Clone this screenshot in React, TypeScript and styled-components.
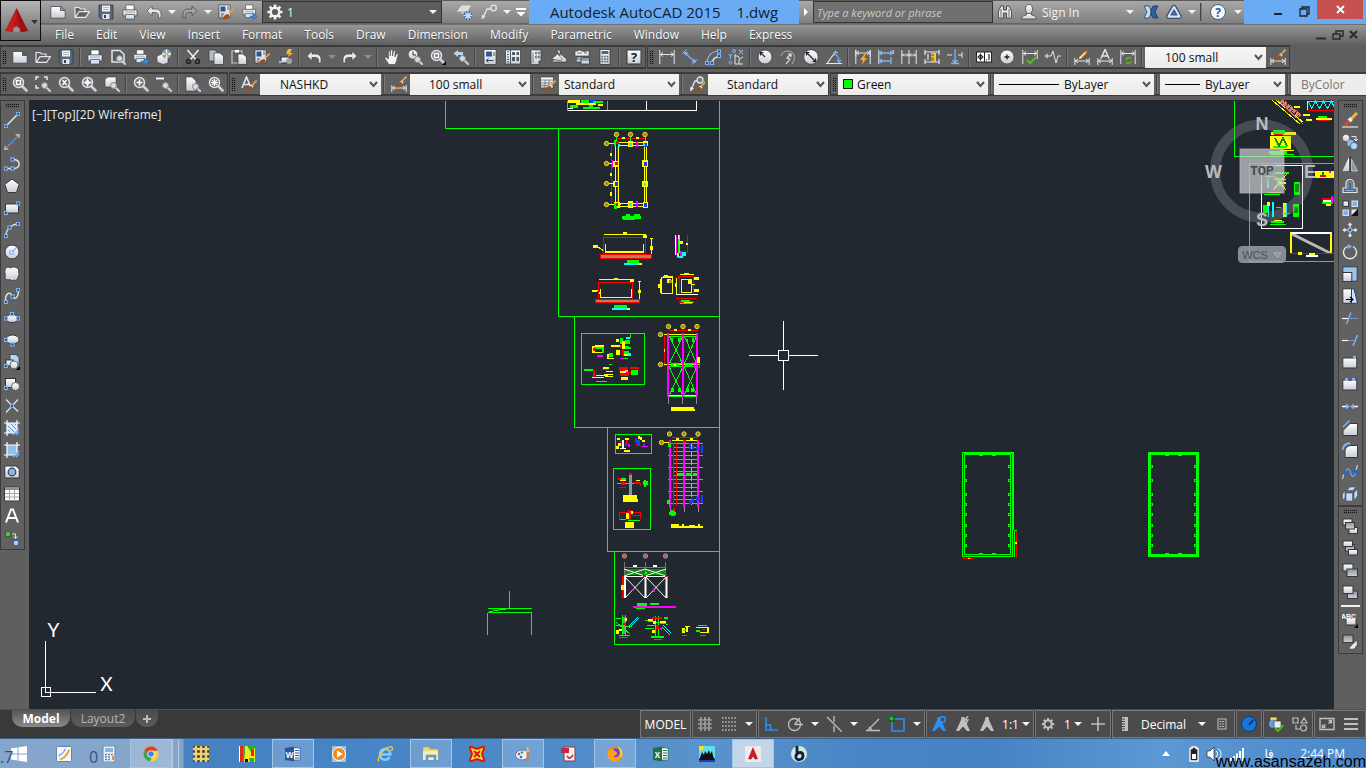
import React from 'react';
import styled, { createGlobalStyle, css } from 'styled-components';

const UI_FONT = '"Open Sans", "Noto Sans", sans-serif';

const GlobalStyle = createGlobalStyle`
  * { box-sizing: border-box; }
  body { margin: 0; background: #5f5f5f; font-family: ${UI_FONT}; font-size: 12px; color: #f2f2f2; overflow: hidden; }
  button, select, input { font: inherit; color: inherit; margin: 0; }
  button { border: 0; padding: 0; background: none; }
`;

/* ---------- icon drawing helpers ---------- */

const BLUE = '#7fb3f8';
const PAPER = 'url(#paper)';
const INK = '#34373b';
const LINE = '#e4e6e8';

const Grip = ({ x, y }: { x: number; y: number }) => (
  <rect x={x - 1.5} y={y - 1.5} width="3" height="3" fill="#2b3a52" stroke={BLUE} strokeWidth="1.2" />
);

const Lens = ({ x = 6.5, y = 6.5, children }: { x?: number; y?: number; children?: React.ReactNode }) => (
  <g transform={`translate(${x - 6.5} ${y - 6.5})`}>
    <path d="M10 10l4.5 4.5" stroke="#c9d2dc" strokeWidth="2.6" strokeLinecap="round" />
    <circle cx="6.5" cy="6.5" r="5" fill="#6b7178" stroke="#dfe2e6" strokeWidth="1.5" />
    {children}
  </g>
);

const SmallLens = () => (
  <g>
    <path d="M11.500 11.500l3.500 3.500" stroke="#c9d2dc" strokeWidth="2" strokeLinecap="round" />
    <circle cx="9.500" cy="9.500" r="3" fill="#d5dbe2" stroke="#80868d" />
  </g>
);

const Brush = () => (
  <g>
    <path d="M15.500 4.500L10.500 10" stroke="#f0a33a" strokeWidth="1.800" />
    <path d="M11.500 9.500L9.500 11.500" stroke="#e8e8e8" strokeWidth="3" />
    <path d="M10.500 10c1.500 1.500 1 4-1.500 5-1.500.5-4 .5-5-.5 2-.5 2-4.500 6.500-4.500z" fill="#96511f" />
  </g>
);

const Printer = () => (
  <g stroke={INK} strokeWidth=".6">
    <path d="M4 1h8v5H4z" fill="#fff" />
    <path d="M1 6h14v6H1z" fill={PAPER} />
    <path d="M3.500 10.500h9V15h-9z" fill="#cfe3f5" />
    <path d="M3 8h10" stroke="#70757b" />
  </g>
);

const Box = ({ x, y, w, h, dim }: { x: number; y: number; w: number; h: number; dim?: boolean }) => (
  <rect x={x} y={y} width={w} height={h} fill={dim ? 'url(#steel)' : PAPER} stroke={INK} strokeWidth="1" />
);

const Span = ({ y = 11 }: { y?: number }) => (
  <path d={`M.8 ${y - 3}v7M15.200 ${y - 3}v7M1 ${y}h14M4 ${y - 2}L1.500 ${y}L4 ${y + 2}M12 ${y - 2}l2.500 2l-2.500 2`} fill="none" stroke={LINE} strokeWidth="1" />
);

const Corner = () => <path d="M16 12v4h-4z" fill="#000" />;

const Person = ({ mark }: { mark?: React.ReactNode }) => (
  <g>
    <path d="M6.500 1h3l.5 3 5 11h-3L8 10.500 4 15H1L6 4z" fill="currentColor" />
    {mark}
  </g>
);

const UndoShape = ({ color = '#e4e6e8' }: { color?: string }) => (
  <path d="M6 2v3h3c4 0 6 2 6 5v4h-2.500v-2.500c0-2-1-3-3.500-3H6v3.200L1 7z" fill={color} stroke={INK} strokeWidth=".6" />
);

const GearShape = () => (
  <g>
    <circle cx="8" cy="8" r="4.300" fill="none" stroke="currentColor" strokeWidth="2.400" />
    <path d="M8 .5v3M8 12.500v3M.5 8h3M12.500 8h3M2.700 2.700l2 2M11.300 11.300l2 2M2.700 13.300l2-2M11.300 4.700l2-2" stroke="currentColor" strokeWidth="2.600" />
  </g>
);

const icons: Record<string, React.ReactNode> = {
  new: <path d="M.8 2.500h10l4.400 4v7.700H.8zM10.500 2.500v4h4.500" fill={PAPER} stroke={INK} strokeWidth=".7" />,
  open: <path d="M1 13V3.500h4l1.500 1.500H11v2.500M1.500 13.300l3.500-5.600h10.500L11.500 13.300z" fill="#5b6066" stroke={LINE} strokeWidth="1.200" />,
  save: <g><path d="M1 1h14v14H3L1 13z" fill="#56687b" stroke={INK} strokeWidth=".8" /><path d="M4 1.500h8v6H4z" fill="#f2f4f6" /><path d="M5 3.500h6M5 5.500h6" stroke="#9aa4ae" strokeWidth=".8" /><path d="M4.500 10h7v5h-7z" fill="#dfe5ea" /><path d="M6 11h2v3H6z" fill="#37424e" /></g>,
  print: <Printer />,
  preview: <g><path d="M2 1.500h8l4 4V13H2z" fill="#595e64" stroke={LINE} strokeWidth="1.500" /><SmallLens /></g>,
  publish: <g><g transform="scale(.9)"><Printer /></g><path d="M8 12.500h4M11.500 9.800l3.500 2.700-3.500 2.700z" stroke="#3d78c4" fill="#6ca7ea" strokeWidth="1.500" /></g>,
  web: <g><path d="M1 7l5-2 6 2v7l-5 1.500L1 13z" fill={PAPER} stroke={INK} strokeWidth=".6" /><circle cx="10.500" cy="5" r="4.600" fill="#5ab7ea" /><path d="M10.500 .5v9M6 5h9" stroke="#fff6c9" strokeWidth="1.500" /><path d="M7.500 2l6 6M13.500 2l-6 6" stroke="#e2693a" strokeWidth=".9" /></g>,
  cut: <g fill="none"><path d="M2.500 1l8.500 10M13.500 1L5 11" stroke="#eef0f2" strokeWidth="1.500" /><circle cx="3.500" cy="12.500" r="2" stroke="#1f2225" strokeWidth="1.500" /><circle cx="12.500" cy="12.500" r="2" stroke="#1f2225" strokeWidth="1.500" /></g>,
  copy: <g><path d="M1 1h6l3 3v8H1z" fill="#b9bdc2" stroke={INK} strokeWidth=".7" /><path d="M6 4h6l3.500 3v8.500H6z" fill={PAPER} stroke={INK} strokeWidth=".7" /></g>,
  paste: <g><path d="M1 2h10v12H1z" fill="#5e6266" stroke="#c2c5c8" strokeWidth="1.200" /><path d="M4 1h4v2.500H4z" fill="#fff" /><path d="M7 5h5l3.500 3v7.500H7z" fill={PAPER} stroke={INK} strokeWidth=".7" /></g>,
  match: <g><path d="M1 1h11v13H1z" fill={PAPER} stroke={INK} strokeWidth=".7" /><path d="M2.500 2.500h5v5h-5z" fill="#2a5590" /><path d="M9 3h2M9 5h2M3 10h3M3 12h2" stroke="#4b5864" /><Brush /></g>,
  block: <g><Box x={4} y={8} w={8} h={6} /><circle cx="12" cy="12" r="3" fill="#9aa1a8" /><path d="M2 13h3" stroke={BLUE} strokeWidth="2.500" /><path d="M11 0l-2 5h3l-1.500 3.500L16 4h-3l2-4z" fill="#ffb524" /></g>,
  undo: <UndoShape />,
  redo: <g transform="matrix(-1 0 0 1 16 0)"><UndoShape /></g>,
  redoOff: <g transform="matrix(-1 0 0 1 16 0)"><UndoShape color="#a0a2a4" /></g>,
  pan: <path d="M5 15.500L1 9.500c-.6-1.300 1-1.800 1.800-.8L4.500 10V3c0-1.500 1.800-1.500 1.800 0v4l.4-5.500c.1-1.300 1.900-1.300 1.900 0V7l.9-4.800c.3-1.200 2-1 1.800.3L10.800 8l1.700-3c.7-1.200 2-.5 1.600.7-1 3-1.300 7-3.100 9.800z" fill="#f3f4f5" stroke={INK} strokeWidth=".5" />,
  zoomRt: <g><circle cx="6" cy="5.500" r="4.800" fill={PAPER} stroke={INK} strokeWidth=".6" /><path d="M6 2.500v3.500h3" stroke="#333" fill="none" /><g transform="translate(1 1)"><SmallLens /></g></g>,
  zoomWin: <g><Lens><rect x="4.500" y="4.500" width="4" height="4" fill="none" stroke="#fff" strokeWidth="1.500" /></Lens><Corner /></g>,
  zoomWinP: <Lens><rect x="4.500" y="4.500" width="4" height="4" fill="none" stroke="#fff" strokeWidth="1.500" /></Lens>,
  zoomPrev: <g><path d="M5 1v2h5v4H8V6H5v2L.5 4.500z" fill="#b8d2f0" /><SmallLens /></g>,
  zoomDyn: <g><path d="M1 4V1h3M9 1h3v3M1 9v3h3" fill="none" stroke={LINE} strokeWidth="1.500" /><SmallLens /></g>,
  zoomScale: <Lens><path d="M4.500 4l4 5M8.500 4l-4 5" stroke="#fff" strokeWidth="1.300" /></Lens>,
  zoomCenter: <Lens><path d="M6.500 2.500v8M2.500 6.500h8" stroke="#fff" strokeWidth="1.600" /><circle cx="6.500" cy="6.500" r="2" fill="none" stroke="#fff" /></Lens>,
  zoomObj: <g><path d="M1 3l3-2h8v8l-2 2H1z" fill={PAPER} stroke={INK} strokeWidth=".6" /><SmallLens /></g>,
  zoomIn: <Lens><path d="M6.500 3.500v6M3.500 6.500h6" stroke="#fff" strokeWidth="1.600" /></Lens>,
  zoomOut: <g><path d="M0 2.500h8" stroke="#fff" strokeWidth="1.800" /><SmallLens /></g>,
  zoomAll: <g><path d="M1 1h6l4 4v10H1z" fill={PAPER} stroke={INK} strokeWidth=".6" /><g transform="translate(1 1)"><SmallLens /></g></g>,
  zoomExt: <Lens><path d="M4 4l5 5M9 4l-5 5M6.500 3v7M3 6.500h7" stroke="#fff" strokeWidth="1.100" /></Lens>,
  props: <g><path d="M2 .5h12v15H2z" fill={PAPER} stroke={INK} strokeWidth=".7" /><path d="M4 2.500h6v5H4z" fill="#2e5a94" /><path d="M12 3v4M4.500 11.500h7M4.500 11.500l2-2M4.500 11.500l2 2" stroke="#36424f" fill="none" /></g>,
  center: <g><path d="M.5 1h15v14H.5z" fill={PAPER} stroke={INK} strokeWidth=".7" /><path d="M2 3h2M2 5.500h2M2 8h2M2 10.500h2M2 13h2M5.500 1v14" stroke="#4d555e" /><path d="M7 3h3v3H7zM11.500 3h2.500v3h-2.500zM7 8h3v4H7zM11.500 8h2.500v4h-2.500z" fill="#4f5a66" /></g>,
  palettes: <g><path d="M3 1h10v11h-2v3.500H3z" fill={PAPER} stroke={INK} strokeWidth=".7" /><path d="M5 3v11M7.500 3h1.500v2H7.500zM10.500 3H12v2h-1.500zM7.500 7h1.500v2H7.500zM10.500 7H12v2h-1.500z" stroke="#6c7278" fill="none" strokeWidth=".9" /></g>,
  sheets: <g fill={PAPER} stroke={INK} strokeWidth=".6"><path d="M.5 13l9-8 6 5v3z" /><path d="M.5 10l6-5 5 5-2 2z" /><path d="M6 1.500l3-.5v6z" /></g>,
  markup: <g><path d="M1 2c3 1 3-2 7 0s5-1 7 0v5H1zM3 8h6v5H2z" fill={PAPER} stroke={INK} strokeWidth=".6" /><path d="M3 4h5M10 4h3M3 10h5" stroke="#636b73" /><rect x="7" y="9" width="8.500" height="6" fill="#c5ddf3" stroke={INK} strokeWidth=".8" /><path d="M7 11h8" stroke="#59646f" /></g>,
  calc: <g><path d="M3 .5h10v15H3z" fill={PAPER} stroke={INK} strokeWidth=".8" /><path d="M4.500 2h7v3h-7z" fill="#5a6672" /><path d="M4.500 7.500h7M4.500 10h7M4.500 12.500h7" stroke="#4d5660" strokeWidth="1.400" strokeDasharray="1.600 1" /></g>,
  help: <g><path d="M1 1h14v14H1z" fill={PAPER} stroke={INK} strokeWidth="1" /><text x="8" y="13" fontSize="13" fontWeight="700" textAnchor="middle" fill="#222">?</text></g>,
  dimLin: <path d="M.8 1v14M15.200 1v14M1 5.500h14M4 3.500l-2.500 2L4 7.500M12 3.500l2.500 2-2.500 2" fill="none" stroke={LINE} />,
  dimAli: <g stroke={BLUE} fill={BLUE}><path d="M3 4l10 9" strokeWidth="1.300" /><path d="M0 5l5-5M10 15.500l5.500-5.500" strokeWidth="1" /><path d="M2 3l4 .5-2.500 3zM14 13.500l-4-.5 2.500-3z" strokeWidth=".5" /></g>,
  dimArc: <g fill="none"><path d="M2 14C2 7 7 2 14 2" stroke={BLUE} strokeWidth="1.200" /><path d="M7 15c0-4 3-7 8-8" stroke={LINE} strokeWidth="1.300" /><Grip x={2} y={14} /><Grip x={7} y={14} /><Grip x={14} y={2.500} /><Grip x={14} y={7} /></g>,
  dimOrd: <g><path d="M7 5v10h8M7 7h3l1 2M11 15v-5l4-2" stroke={LINE} fill="none" /><path d="M1 5l1.500 2L4 5M2.500 7v3M11 1l4 4M15 1l-4 4" stroke={BLUE} fill="none" strokeWidth="1.200" /><circle cx="6" cy="2" r="1.500" fill="none" stroke={BLUE} /><circle cx="2.500" cy="13.500" r="1.500" fill="none" stroke={BLUE} /></g>,
  dimRad: <g><circle cx="8" cy="8" r="7" fill={PAPER} stroke={INK} strokeWidth=".8" /><path d="M8 8L4 4M3.500 6.500v-3h3" stroke="#222" strokeWidth="1.200" fill="none" /></g>,
  dimJog: <g fill="none"><path d="M1 7C3 1 11 0 14 6c1 3 0 6-2 9" stroke="#aeb1b4" /><path d="M6 15l4-5-3-1 4-4M8 5h3v3" stroke={LINE} strokeWidth="1.200" /></g>,
  dimDia: <g><circle cx="8" cy="8" r="7.300" fill={PAPER} stroke={INK} strokeWidth=".8" /><path d="M3.500 3.500l9 9M3.500 6.500v-3h3M12.500 9.500v3h-3" stroke="#222" strokeWidth="1.200" fill="none" /></g>,
  dimAng: <g fill="none"><path d="M0 14.500h16M1 14.500L10 2" stroke={LINE} strokeWidth="1.200" /><path d="M8 4c4 2 5 6 5 9M8 7V3.500h4M11 11l2 2.500 2-2.500" stroke={BLUE} strokeWidth="1.200" /></g>,
  quick: <g><Span y={4} /><path d="M.8 1v14M15.200 1v14" stroke={LINE} /><path d="M9.500 5L5 11h3l-1.500 5L12 9H9l2-4z" fill="#ffab1f" /></g>,
  base: <g fill="none"><path d="M.8 1v14M15.200 1v4" stroke={LINE} /><path d="M1 4h14M1 12h12M13 8v7M4 2L1.500 4 4 6M12 2l2.500 2L12 6M4 10l-2.500 2L4 14" stroke={BLUE} strokeWidth="1.300" /></g>,
  cont: <path d="M.8 1v14M8 1v14M15.200 1v14M1 6h14M3 4.500L1.500 6 3 7.500M6 4.500L7.500 6 6 7.500M10 4.500L8.500 6 10 7.500M13 4.500L14.500 6 13 7.500" fill="none" stroke={LINE} />,
  space: <g fill="none"><path d="M1 1v5M15 1v5M1 3h14M1 10v5M15 10v5M1 13h14M4 5v6" stroke={LINE} strokeWidth="1.200" /><path d="M7 4h5v9H7z" fill="#ffc338" stroke="none" /><path d="M7 6h3M7 9h3M7 11h3" stroke="#6a4e12" /></g>,
  brk: <g fill="none"><path d="M0 6h5M15 3v6M11 6h4" stroke={LINE} /><path d="M8 0v13M5.500 11L8 14l2.500-3M4 14.500h8" stroke={BLUE} strokeWidth="1.300" /></g>,
  tol: <g><rect x=".5" y="3" width="15" height="10" fill="#fff" stroke="#222" /><path d="M8.500 3v10M4.500 4.500v7M1.500 8h6" stroke="#222" /><circle cx="4.500" cy="8" r="2" fill="none" stroke="#222" /><path d="M10.500 10.500v1M13 5v6" stroke="#222" strokeWidth="1.200" /></g>,
  mark: <g><circle cx="8" cy="8" r="7" fill={PAPER} stroke={INK} strokeWidth=".7" /><path d="M8 5.500v5M5.500 8h5" stroke="#222" strokeWidth="1.300" /></g>,
  inspect: <g><path d="M.8 1v14M15.200 1v9M1 4.500h14M4 2.500l-2.500 2 2.500 2M12 2.500l2.500 2-2.500 2" fill="none" stroke={LINE} /><path d="M5 11l3 3 6-6" fill="none" stroke="#57b51c" strokeWidth="2.300" /></g>,
  jogLin: <path d="M0 7h4l2 0L8 2l3 12 2-7h3M3 5L.5 7 3 9" fill="none" stroke={LINE} />,
  edit: <g><Span y={12} /><path d="M5 10l1-3 6-6 2 2-6 6z" fill="#ffca62" stroke="#8c4a18" strokeWidth=".7" /><path d="M5 10l1-3 2 2z" fill="#fff" /><path d="M11 1.500l2 2" stroke="#e05545" strokeWidth="1.500" /></g>,
  textEd: <g><Span y={12} /><path d="M4 9.500L8 .5l4 9M5.500 7h5" fill="none" stroke={LINE} strokeWidth="1.500" /></g>,
  update: <g><path d="M.8 1v14M15.200 1v14M1 4.500h14M4 2.500l-2.500 2 2.500 2M12 2.500l2.500 2-2.500 2" fill="none" stroke={LINE} /><path d="M6 11c1-3 4-3 5-1M11.500 12c-1 3-4 3-5 1" fill="none" stroke="#57b51c" strokeWidth="1.700" /></g>,
  dimStyle: <g><Span y={12} /><g transform="translate(0 -4)"><Brush /></g></g>,
  textStyle: <g><path d="M1 12L5.500 1 10 12M2.500 8.500h6" fill="none" stroke={LINE} strokeWidth="1.600" /><Brush /></g>,
  tableStyle: <g><path d="M.5 1h13v11H.5z" fill={PAPER} stroke={INK} strokeWidth=".7" /><path d="M.5 4h13M.5 7h13M.5 9.500h13M5 4v8M9 4v8" stroke="#6e757c" strokeWidth=".8" /><Brush /></g>,
  leaderStyle: <g><path d="M2 14L6 5h3" stroke={LINE} strokeWidth="1.300" fill="none" /><path d="M1 15.500l.5-5 3.500 2z" fill={LINE} /><circle cx="11" cy="4" r="3" fill="#717980" stroke={LINE} strokeWidth="1.300" /><g transform="translate(1 1)"><Brush /></g></g>,
  leader: <g><path d="M2 14L6 5h4" stroke={LINE} strokeWidth="1.300" fill="none" /><path d="M.5 15.500l.5-5 3.500 2z" fill={LINE} /><circle cx="12.500" cy="4" r="2.800" fill="none" stroke={LINE} strokeWidth="1.300" /></g>,
  sheetSet: <g><path d="M1 7l4-5h8l-3 5zM4 9h3" fill="#d9dde2" stroke={LINE} strokeWidth="1.200" /><circle cx="11" cy="11.500" r="4.500" fill="#3d5f8c" /><path d="M11 7v9M6.500 11.500h9M8 8.500l6 6M14 8.500l-6 6" stroke="#c3dcf8" strokeWidth="1.300" /></g>,
  gear: <GearShape />,
  cog: <g transform="translate(1.500 1.500) scale(.82)"><GearShape /></g>,
  more: <g fill="#fff"><path d="M3 4h10v2H3zM3.500 8h9L8 12.500z" /></g>,
  find: <g><path d="M1.500 14V7L4 2h2.500v4h3V2H12l2.500 5v7h-5V9h-3v5z" fill="#e4e6e8" stroke={INK} strokeWidth=".8" /><path d="M4 5v8M12 5v8" stroke="#6a7076" /></g>,
  user: <g fill={PAPER} stroke={INK} strokeWidth=".7"><path d="M.5 15c0-3 3-3.500 5-4V9h5v2c2 .5 5 1 5 4z" /><ellipse cx="8" cy="5" rx="3.600" ry="4.600" /></g>,
  exchange: <g><path d="M1 2h5c1 2 2 4 2 6s-1 4-2 6H1l3-6z" fill="#c4dbf4" stroke="#1b3f70" strokeWidth=".8" /><path d="M15 2h-5C9 4 8 6 8 8s1 4 2 6h5l-3-6z" fill="#2f5f9e" stroke="#16335c" strokeWidth=".8" /></g>,
  a360: <g strokeLinejoin="round"><path d="M8 3L2.500 12.500h11z" stroke="#26456f" strokeWidth="4.500" /><path d="M8 3L2.500 12.500h11z" stroke="#d5e3f5" strokeWidth="2.400" /><path d="M8 5.500L4.800 11h6.400z" stroke="#4b6fa0" strokeWidth=".8" /></g>,
  helpRound: <g><circle cx="8" cy="8" r="7.500" fill="#f4f6f8" stroke="#2b4464" strokeWidth=".8" /><text x="8" y="12.500" fontSize="12" fontWeight="700" textAnchor="middle" fill="#1d5fae">?</text></g>,
  line: <g><path d="M1.500 14.500l13-13" stroke={LINE} strokeWidth="1.400" /><Grip x={1.800} y={14.200} /><Grip x={14.200} y={1.800} /></g>,
  xline: <g><path d="M3 13L13 3" stroke="#a9acaf" /><path d="M0 16l.5-4.500L5 16zM16 0l-.5 4.500L11 0z" fill="#b4b7ba" /><rect x="6.500" y="6.500" width="3.500" height="3.500" fill="#1d86ff" /></g>,
  pline: <g><path d="M2 12.500h8c7 0 7-9-1-9" stroke={LINE} strokeWidth="1.400" fill="none" /><Grip x={1.800} y={12.500} /><Grip x={8.500} y={12.500} /><Grip x={8.500} y={3.500} /></g>,
  polygon: <path d="M8 1l7.200 5.300-2.700 8.200h-9L.8 6.300z" fill={PAPER} stroke={INK} />,
  rect: <g><Box x={1.500} y={4} w={13} h={9} /><Grip x={1.800} y={13} /><Grip x={14.200} y={3.500} /></g>,
  arc: <g><path d="M1.800 14C2 7 8 2 14 1.800" stroke={LINE} strokeWidth="1.300" fill="none" /><Grip x={1.800} y={14} /><Grip x={5.500} y={5.500} /><Grip x={14} y={1.800} /></g>,
  circle: <g><circle cx="8" cy="8" r="7" fill={PAPER} stroke={INK} /><path d="M8 8l4-4" stroke={BLUE} strokeWidth="1.400" /><rect x="6" y="7" width="3" height="3" fill="#fff" stroke={BLUE} strokeWidth="1.200" /></g>,
  cloud: <path d="M2 2c1-1.500 3-1 4 0 2-1.500 5-1.500 7 0 2 1 2 3 1.500 4 1 2 .5 4-.5 5 0 3-3 4-5 3-1 1-2 .5-3-.5-2 1-5 0-5-2 .3-1 0-2 .5-3C.5 7 .5 4 2 2z" fill={PAPER} stroke={INK} strokeWidth=".9" />,
  spline: <g><path d="M1.500 14C1 5 6 3 8 7.500s6 4 6.500-5" stroke={LINE} strokeWidth="1.400" fill="none" /><Grip x={1.800} y={14} /><Grip x={8.500} y={8.500} /><Grip x={14.200} y={1.800} /></g>,
  ellipse: <g><ellipse cx="8" cy="8.500" rx="6.500" ry="4" fill={PAPER} stroke={INK} /><Grip x={1.800} y={8.500} /><Grip x={14.200} y={8.500} /><Grip x={8} y={4} /></g>,
  ellArc: <g><ellipse cx="8.500" cy="7.500" rx="6.500" ry="4.500" fill={PAPER} stroke={INK} /><Grip x={1.800} y={8} /><Grip x={8.500} y={12.500} /></g>,
  insert: <g><path d="M6 .5h6l3 3V13H6z" fill="#b7d6f5" stroke={INK} strokeWidth=".8" /><Box x={2} y={6} w={7} h={6} /><circle cx="10" cy="11" r="4" fill={PAPER} stroke={INK} strokeWidth=".7" /><Grip x={1.800} y={12} /><Corner /></g>,
  makeBlock: <g><Box x={1.500} y={2.500} w={10} h={9} /><circle cx="11.500" cy="10.500" r="4" fill={PAPER} stroke={INK} strokeWidth=".7" /><Grip x={1.800} y={12} /></g>,
  point: <g><path d="M2 1.500l12 12M14 1.500L2 14.500" stroke={LINE} strokeWidth="1.200" /><Grip x={8} y={8} /></g>,
  hatch: <g><rect x="3" y="3" width="10" height="10" fill="#dceafb" /><path d="M3 5l8 8M3 9l4 4M6 3l7 7M10 3l3 3" stroke="#5d92d8" /><path d="M0 3h16M0 13h12M3 0v16M13 0v12" stroke="#fff" strokeWidth="1.200" /><path d="M9 15l6-6M12 15l3-3" stroke={BLUE} strokeWidth="1.400" /></g>,
  gradient: <g><rect x="3" y="3" width="10" height="10" fill="#8fc0ee" /><path d="M0 3h16M0 13h12M3 0v16M13 0v12" stroke="#fff" strokeWidth="1.200" /><path d="M9 15l6-6M12 15l3-3" stroke={BLUE} strokeWidth="1.400" /></g>,
  region: <g><path d="M.8 2h11l3.500 3v9H.8z" fill={PAPER} stroke={INK} /><circle cx="8" cy="8" r="3.800" fill="#8fb6e2" stroke="#27405f" strokeWidth="1.200" /></g>,
  table: <g><path d="M.5 1h15v14H.5z" fill="#fafafa" stroke={INK} /><path d="M1 1h14v3H1z" fill="#8b949d" /><path d="M1 7.500h14M1 11h14M5.500 4v11M10.500 4v11" stroke="#a3a8ad" /></g>,
  mtext: <path d="M2 14.500L7 1.500h2l5 13M4 10h8" fill="none" stroke="#fff" strokeWidth="2" />,
  addSel: <g><circle cx="4" cy="4" r="3" fill="#6ab04c" stroke="#1e5a1a" /><circle cx="12" cy="13" r="3" fill="#a9cff5" stroke="#1f4e86" /><path d="M8 4h3.500v4M9.500 6.500l2 2 2-2" fill="none" stroke={LINE} /></g>,
  erase: <g><path d="M0 15h16" stroke="#fff" /><path d="M15 1L9 7" stroke="#f2b83a" strokeWidth="3" /><path d="M9.500 6.500l-2.500 2.500" stroke="#eee" strokeWidth="4" /><path d="M5.500 7.500l3 3-4 3.500-3 0z" fill="#d4492c" /></g>,
  copyObj: <g><circle cx="4" cy="4" r="3.600" fill={PAPER} stroke={INK} strokeWidth=".5" /><circle cx="8.500" cy="9" r="3.300" fill="#8fb9e6" /><circle cx="12" cy="12" r="3.600" fill="#b8d4f2" stroke="#2f5688" strokeWidth=".7" /><path d="M9.500 2.500h4.500v4M12 5l2 2 2-2" fill="none" stroke={LINE} /></g>,
  mirror: <g><path d="M7 1v14H.5z" fill={PAPER} /><path d="M9.500 3v12h6z" fill="#8f969d" stroke={LINE} strokeWidth=".6" /><path d="M8.300 0v16" stroke="#333" /></g>,
  offset: <g fill="none"><path d="M1 14.500h14V10h-3V6c0-6-8-6-8 0v4H1z" stroke={LINE} strokeWidth="1.200" /><path d="M3.500 12.500h9M6 11V6c0-3 4-3 4 0v5" stroke={BLUE} /></g>,
  array: <g><Box x={1} y={1} w={5.500} h={5.500} /><g fill="#7fb0e6" stroke="#d3e4f7"><rect x="10" y="1" width="5.500" height="5.500" /><rect x="1" y="10" width="5.500" height="5.500" /></g><path d="M9.500 15.500v-6h6z" fill="#dfe9f4" /><path d="M16 9v7H9z" fill="#111" /></g>,
  move: <g fill={LINE} stroke={INK} strokeWidth=".4"><path d="M8 0l3 3.500H9V6H7V3.500H5zM8 16l3-3.500H9V10H7v2.500H5zM0 8l3.500-3v2H6v2H3.500v2zM16 8l-3.500-3v2H10v2h2.500v2z" /><Grip x={8} y={8} /></g>,
  rotate: <g><path d="M5 2.500A6.500 6.500 0 1 0 11 2.500" fill="none" stroke={LINE} strokeWidth="1.400" /><path d="M5.500 0v5L10.500 2.500z" fill={BLUE} /></g>,
  scale: <g><rect x=".8" y=".8" width="14.400" height="14.400" fill="#9ec4ea" stroke="#25405f" /><Box x={.8} y={6.500} w={9} h={9} /></g>,
  stretch: <g><path d="M.8.8h9v14.500h-9z" fill={PAPER} stroke={INK} /><path d="M9.500.8h2.500l3.500 14.500h-6z" fill="#cfe4fa" stroke="#27405f" /><path d="M4 11.500h6M8 9l3 2.500L8 14" stroke="#000" strokeWidth="1.200" fill="none" /></g>,
  trim: <g><path d="M0 8.500h6" stroke="#fff" strokeWidth="1.200" /><path d="M8.500 8.500H16" stroke={BLUE} strokeDasharray="2 1" /><path d="M4.500 14L9 2.500" stroke={BLUE} strokeWidth="1.400" /></g>,
  extend: <g><path d="M0 8.500h6" stroke="#fff" strokeWidth="1.200" /><path d="M6.500 8.500H12" stroke={BLUE} strokeDasharray="2 1" /><path d="M11 14l4.500-11" stroke={BLUE} strokeWidth="1.400" /></g>,
  breakPt: <g><Box x={.8} y={4} w={14} h={10} /><rect x="11" y="2" width="3" height="3" fill={BLUE} /></g>,
  breakObj: <g><Box x={.8} y={4} w={14} h={10} /><path d="M6.500 4h3" stroke="#606060" strokeWidth="2" /><rect x="3" y="2" width="3" height="3" fill={BLUE} /><rect x="10" y="2" width="3" height="3" fill={BLUE} /></g>,
  join: <g><path d="M0 8.500h4M12 8.500h4" stroke="#fff" strokeWidth="1.400" /><path d="M4 5.500l4 3 4-3v6l-4-3-4 3z" fill={BLUE} /></g>,
  chamfer: <g><path d="M8 3.500h7.500v12H1v-5z" fill={PAPER} stroke={INK} /><path d="M1 7l6.500-6.500" stroke={BLUE} strokeWidth="1.500" /></g>,
  fillet: <g><path d="M9 3.500h6.500v12H3V10c0-4 2-6 6-6.500z" fill={PAPER} stroke={INK} /><path d="M.5 8C1 4 4 1.500 8 1" stroke={BLUE} strokeWidth="1.800" fill="none" /></g>,
  blend: <g><path d="M3 9c3-8 5-3 6 1s4 3 5-3" fill="none" stroke="#5d9ff2" strokeWidth="1.400" /><path d="M.5 15L2 9M15.500 1L14 7" stroke="#c9c9c9" strokeWidth="1.300" /><rect x="1" y="7" width="3.500" height="3.500" fill="#0d6dea" /><rect x="12" y="6" width="3.500" height="3.500" fill="#0d6dea" /></g>,
  explode: <g fill="#c8ddf2" stroke="#3c536d" strokeWidth=".6"><path d="M5 4.500l3-3.500h6l-3 3.500z" /><path d="M12 7l3.500-4v7L12 14z" /><path d="M4 7h6.500v8H4z" /><path d="M.5 8L3 5v7L.5 14z" /></g>,
  front: <g><Box x={1} y={1} w={9} h={6} /><Box x={7} y={9.500} w={8.500} h={6} /><Box x={3.500} y={4.500} w={9} h={6.500} dim /></g>,
  back: <g><Box x={3.500} y={4.500} w={9} h={6.500} dim /><Box x={1} y={1} w={9.500} h={5.500} /><Box x={6.500} y={9.500} w={9} h={5.500} /></g>,
  above: <g><Box x={1} y={2} w={10} h={7} /><Box x={5} y={7} w={10.500} h={7.500} dim /></g>,
  under: <g><Box x={5.500} y={7} w={10} h={7.500} dim /><Box x={1} y={2} w={10} h={7.500} /></g>,
  textFront: <g><Box x={4} y={6} w={10} h={7} /><text x="6.500" y="7" fontSize="7" fontFamily="Liberation Sans" fontWeight="700" textAnchor="middle" fill="#fff">ABC</text><Corner /></g>,
  hatchBack: <g><Box x={1} y={1} w={10} h={7.500} dim /><path d="M7 14l8-8v5l-3 4H8z" fill="#e9ecef" stroke={INK} strokeWidth=".7" strokeDasharray="1.500 1" /></g>,
  gridLines: <path d="M4 1v14M8 1v14M12 1v14M1 4h14M1 8h14M1 12h14" stroke="currentColor" strokeWidth="1.200" strokeDasharray="3 .8" />,
  gridDots: <path d="M1 2h14M1 6h14M1 10h14M1 14h14" stroke="currentColor" strokeWidth="1.600" strokeDasharray="1.500 1.600" />,
  ortho: <path d="M3 1v13h12M3 9h4.500v5" fill="none" stroke="currentColor" strokeWidth="1.600" />,
  polar: <g fill="none" stroke="currentColor" strokeWidth="1.300"><circle cx="7.500" cy="8.500" r="6" /><path d="M7.500 8.500H16M7.500 8.500L13 2" /></g>,
  iso: <path d="M1 1l15 15M8 0v6M8 10v6" stroke="currentColor" strokeWidth="1.300" />,
  otrack: <path d="M1 14.500h14M3 14L14 3M4 11l3 3" stroke="currentColor" strokeWidth="1.300" fill="none" />,
  osnap: <g><path d="M3 3h12v12H3z" fill="none" stroke="currentColor" strokeWidth="1.600" /><rect x="0" y="0" width="5" height="5" fill="#1fc21f" stroke="#0a3a0a" /></g>,
  annoOn: <Person mark={<circle cx="11.500" cy="3.500" r="2.800" fill="none" stroke="currentColor" strokeWidth="1.500" />} />,
  annoAuto: <Person mark={<path d="M13 0l-3 4h3l-2 4" stroke="currentColor" strokeWidth="1.400" fill="none" />} />,
  anno: <Person />,
  plus: <path d="M8 1v14M1 8h14" stroke="currentColor" strokeWidth="1.500" />,
  ruler: <g><path d="M5 1h6v14H5z" fill="currentColor" /><path d="M5 3h3M5 5.500h3M5 8h3M5 10.500h3M5 13h3" stroke="#444" /></g>,
  quickProps: <g><rect x="4" y="3" width="8" height="10" fill="none" stroke="currentColor" /><path d="M5.500 5.500h5M5.500 8h5M5.500 10.500h5" stroke="currentColor" strokeDasharray="2 .7" /></g>,
  hardware: <g><circle cx="8" cy="8" r="7.500" fill="#1877d6" stroke="#073c80" /><path d="M8 9l4-5" stroke="#0a2c58" strokeWidth="1.500" /></g>,
  isolate: <g><path d="M2 1h7v4H2z" fill="#f5d34b" stroke="#333" strokeWidth=".6" /><circle cx="5" cy="8" r="4" fill="#5e9ee8" /><path d="M6 5h7v7H6z" fill="#e9edf1" stroke="#333" strokeWidth=".6" /><path d="M7 12l3 3 5-6" fill="none" stroke="#49b81e" strokeWidth="2.200" /></g>,
  shapes: <g fill="none" stroke="currentColor" strokeWidth="1.200"><path d="M1 2h5v5H1zM9 7l3-5 3 5zM4 9v4h4" /><circle cx="11.500" cy="12" r="3" /></g>,
  clean: <g fill="none" stroke="currentColor" strokeWidth="1.400"><path d="M1 2.500h14v11H1z" /><path d="M9.500 7.500l3-3M12.500 7.500v-3h-3M6.500 8.500l-3 3M3.500 8.500v3h3" /></g>,
  menu: <path d="M1 3h14M1 8h14M1 13h14" stroke="currentColor" strokeWidth="1.800" />,
};

const IconSvg = styled.svg`
  display: block;
  width: 16px;
  height: 16px;
  flex: none;
`;

const Icon = ({ name }: { name: string }) => (
  <IconSvg viewBox="0 0 16 16" fill="none" aria-hidden="true">{icons[name]}</IconSvg>
);

/* ---------- title and menus ---------- */

const Shell = styled.div`
  height: 100vh;
  display: flex;
  flex-direction: column;
  background: #5f5f5f;
`;

const Header = styled.header`
  display: flex;
  height: 45px;
  flex: none;
  background: linear-gradient(#5a5a5a 0 1px, #a8a8a8 1px, #808080 23px, #4a4a4a 24px, #969696 25px, #606060 45px);
`;

const AppButton = styled.button`
  width: 41px;
  height: 41px;
  flex: none;
  display: flex;
  align-items: center;
  justify-content: center;
  border: 1px solid #0c0c0c;
  background: linear-gradient(#b5b5b5, #787878 80%, #6a6a6a);
`;

const HeaderRows = styled.div`
  flex: 1;
  min-width: 0;
`;

const TitleRow = styled.div`
  display: flex;
  height: 24px;
  align-items: center;
  padding-left: 5px;
`;

const Tool = styled.button<{ $w?: number; $tall?: boolean; $color?: string }>`
  width: ${p => p.$w ?? 23}px;
  height: ${p => (p.$tall ? 22 : 20)}px;
  flex: none;
  display: flex;
  align-items: center;
  justify-content: center;
  color: ${p => p.$color ?? '#e6e6e6'};
`;

const Arrow = styled.span<{ $color?: string }>`
  border: 4px solid transparent;
  border-top-color: ${p => p.$color ?? '#f4f4f4'};
  border-bottom: 0;
`;

const DropTool = ({ w = 12, color, label }: { w?: number; color?: string; label: string }) => (
  <Tool $w={w} aria-label={label}><Arrow $color={color} /></Tool>
);

const WorkspaceBox = styled.label`
  display: flex;
  align-items: center;
  width: 180px;
  height: 22px;
  flex: none;
  gap: 4px;
  padding: 0 4px;
  background: #5c5c5c;
  border: 1px solid #343434;
  margin-right: 11px;
`;

const PlainSelect = styled.select`
  appearance: none;
  flex: 1;
  min-width: 0;
  width: 10px;
  height: 20px;
  border: 0;
  padding: 0;
  background: transparent;
  outline: 0;
  &:disabled { opacity: 1; color: #777; }
`;

const Title = styled.h1`
  flex: 1;
  min-width: 0;
  height: 24px;
  margin: 0;
  display: flex;
  align-items: center;
  justify-content: center;
  gap: 16px;
  background: #69abf5;
  color: #16202c;
  font-size: 15px;
  font-weight: 400;
  white-space: nowrap;
  overflow: hidden;
`;

const SearchInput = styled.input`
  width: 180px;
  min-width: 60px;
  height: 22px;
  padding: 0 3px;
  border: 1px solid #343434;
  background: #707070;
  color: #c8c8c8;
  font-size: 11px;
  font-style: italic;
  &::placeholder { color: #c8c8c8; opacity: 1; }
`;

const SignIn = styled.button`
  display: flex;
  align-items: center;
  justify-content: space-between;
  width: 96px;
  height: 22px;
  padding: 0 3px 0 1px;
  margin-right: 2px;
`;

const WindowButtons = styled.div`
  display: flex;
  width: 122px;
  height: 24px;
  margin-left: auto;
  padding: 0 3px 0 21px;
  background: #69abf5;
  flex: none;
`;

const WinButton = styled.button<{ $close?: boolean }>`
  width: ${p => (p.$close ? 46 : 26)}px;
  height: ${p => (p.$close ? 19 : 22)}px;
  display: flex;
  align-items: center;
  justify-content: center;
  background: ${p => (p.$close ? '#c75050' : 'transparent')};
`;

const MenuRow = styled.nav`
  display: flex;
  height: 21px;
  align-items: center;
  padding: 0 5px 0 3px;
`;

const MenuItem = styled.button`
  height: 20px;
  padding: 0 11px;
  color: #fafafa;
  white-space: nowrap;
  text-shadow: 0 1px 1px #444;
`;

const Spacer = styled.span`
  flex: 1;
`;

/* ---------- toolbars ---------- */

const ToolRow = styled.div`
  display: flex;
  height: 24px;
  flex: none;
  margin-bottom: 3px;
  gap: 1px;
  overflow: hidden;
`;

const Panel = styled.div<{ $grow?: boolean }>`
  display: flex;
  align-items: center;
  height: 24px;
  flex: ${p => (p.$grow ? '1 0 auto' : 'none')};
  border: 1px solid #3b3b3b;
  border-width: 2px 1px;
  background: #616161;
`;

const GripDots = styled.span<{ $flat?: boolean }>`
  flex: none;
  width: ${p => (p.$flat ? 14 : 5)}px;
  height: ${p => (p.$flat ? 5 : 14)}px;
  margin: ${p => (p.$flat ? '2px 0 1px' : '0 1px')};
  background:
    repeating-linear-gradient(90deg, #5a5a5a 0 1px, transparent 1px 2px),
    repeating-linear-gradient(#5a5a5a 0 1px, transparent 1px 2px),
    #111;
`;

const Rule = styled.span`
  width: 2px;
  height: 18px;
  margin: 0 2px;
  flex: none;
  background: #454545;
  border-right: 1px solid #787878;
`;

const Combo = styled.label<{ $w: number; $pad?: number; $off?: boolean }>`
  display: flex;
  align-items: center;
  flex: none;
  width: ${p => p.$w}px;
  height: 21px;
  padding-left: ${p => p.$pad ?? 5}px;
  padding-right: 3px;
  background: ${p => (p.$off ? '#ededed' : 'linear-gradient(#f6f6f6, #ebebeb)')};
  color: #111;
`;

const Swatch = styled.span`
  width: 10px;
  height: 10px;
  margin-right: 4px;
  flex: none;
  background: #00ff00;
  border: 1px solid #111;
`;

const Stroke = styled.span<{ $w: number }>`
  width: ${p => p.$w}px;
  height: 1px;
  flex: none;
  margin-right: 5px;
  background: #000;
`;

const Chevron = () => (
  <svg width="9" height="7" viewBox="0 0 9 7" aria-hidden="true"><path d="M1 1l3.500 4L8 1" fill="none" stroke="#555" strokeWidth="2" /></svg>
);

type ComboProps = { w: number; pad?: number; value: string; label: string; lead?: React.ReactNode; off?: boolean };
const ComboBox = ({ w, pad, value, label, lead, off }: ComboProps) => (
  <Combo $w={w} $pad={pad} $off={off}>
    {lead}
    <PlainSelect aria-label={label} disabled={off}><option>{value}</option></PlainSelect>
    {!off && <Chevron />}
  </Combo>
);

const Tools = ({ names, tall }: { names: string; tall?: boolean }) => (
  <>
    {names.split(' ').map((n, i) => {
      if (n === '|') return <Rule key={i} />;
      if (n === 'v') return <DropTool key={i} w={13} color="#8c8c8c" label="History" />;
      return <Tool key={i} $tall={tall} aria-label={n}><Icon name={n} /></Tool>;
    })}
  </>
);

/* ---------- workspace ---------- */

const Workspace = styled.div`
  display: flex;
  flex: 1;
  min-height: 0;
  margin-top: 1px;
`;

const Dock = styled.aside<{ $right?: boolean }>`
  width: ${p => (p.$right ? 32 : 29)}px;
  flex: none;
  display: flex;
  flex-direction: column;
  padding-left: ${p => (p.$right ? 4 : 0)}px;
`;

const DockPanel = styled.div`
  width: 25px;
  display: flex;
  flex-direction: column;
  align-items: center;
  padding-right: 1px;
  border: 1px solid #3b3b3b;
  background: #616161;
`;

const DockRule = styled.span`
  width: 19px;
  height: 2px;
  margin: 2px 0;
  background: #f2f2f2;
`;

const Canvas = styled.main`
  position: relative;
  flex: 1;
  min-width: 0;
  background: #212830;
  overflow: hidden;
`;

const Drawing = styled.svg`
  display: block;
  width: 100%;
  height: 100%;
`;

const ViewLabel = styled.div`
  position: absolute;
  left: 3px;
  top: 5px;
  display: flex;
  button { height: 18px; color: #e8eaec; }
`;

const WcsButton = styled.button`
  position: absolute;
  right: 48px;
  top: 146px;
  width: 48px;
  height: 17px;
  display: flex;
  align-items: center;
  justify-content: center;
  gap: 5px;
  border-radius: 4px;
  border: 1px solid #8b8f96;
  background: rgba(160, 162, 172, .8);
  color: #4c5058;
  font: 11px "Liberation Sans", sans-serif;
`;

const palette: Record<string, string> = {
  g: '#00ff00', y: '#ffff00', r: '#ff0000', c: '#00ffff', m: '#ff00ff', w: '#ffffff', b: '#1b3cff', p: '#c07a5a', o: '#b08a50', k: '#8a8d90', d: '#0b8a0b',
};

/* Each entry reads "colour x y width height". */
const Bits = ({ data }: { data: string }) => (
  <g>
    {data.trim().split(',').map((s, i) => {
      const [c, x, y, w, h] = s.trim().split(' ');
      return <rect key={i} x={x} y={y} width={w} height={h} fill={palette[c]} />;
    })}
  </g>
);

/* Stroked polylines: "colour path". */
const Strokes = ({ items }: { items: [string, string][] }) => (
  <g transform="translate(.5 .5)" fill="none">
    {items.map(([c, d], i) => <path key={i} d={d} stroke={palette[c]} />)}
  </g>
);

const Bubbles = ({ at, c = 'y' }: { at: [number, number][]; c?: string }) => (
  <g shapeRendering="auto">
    {at.map(([x, y], i) => <circle key={i} cx={x} cy={y} r="2.200" fill={c === 'y' ? '#9a8a30' : '#8c6a80'} stroke={c === 'y' ? '#e8e020' : '#c08a60'} />)}
  </g>
);

const wallStops = [466, 480, 494, 504, 514, 525, 535, 545];

const Frames = () => (
  <Strokes items={[
    ['g', 'M445 100V128H719M719 100V644M558 128V316H719M574 316V427H719M607 427V551H719M614 551V644H719'],
    ['g', 'M567 100V110M607 100V110'], ['w', 'M567 110H696V100M646 100V110'],
    ['g', 'M581 333H644V384H581zM615 434H651V453H615zM613 468H650V529H613z'],
    ['g', 'M509 590V608M487 608H531M487 612H531M487 612V634M531 612V634M489 611L509 608'],
  ]} />
);

const FoundationPlan = () => (
  <g>
    <Bubbles at={[[616.500, 134.500], [630.500, 134.500], [645, 134.500], [606.500, 143.500], [606.500, 163.500], [606.500, 183.500], [606.500, 204.500]]} />
    <Strokes items={[
      ['r', 'M616 138H645M611 143V203'], ['y', 'M608 143H615M608 163H613M608 183H613M608 204H620'],
      ['y', 'M615 142H646V206H615zM618 145H644V203H618z'], ['b', 'M617 146V160M617 168V180M617 188V202M645 166V200M626 204H638'],
      ['g', 'M616 136V140M630 136V141M645 136V141'],
    ]} />
    <Bits data="y 622 137 3 2,y 636 137 3 2,g 614 140 2 6,r 616 141 3 3,c 618 144 2 3,y 628 141 5 6,c 629 143 3 3,m 636 142 2 5,y 643 141 5 5,b 644 143 3 4,c 643 144 2 2,y 613 161 6 6,r 615 162 3 3,m 612 160 1 8,y 642 160 6 7,b 644 162 3 4,y 613 181 6 6,b 615 182 3 4,y 642 181 6 6,c 644 183 2 3,y 614 202 6 6,g 614 203 3 6,r 616 203 2 3,y 628 201 5 7,c 629 203 3 3,m 636 201 2 6,y 643 202 5 6,b 644 203 3 4,y 610 153 2 3,y 610 173 2 3,y 610 192 2 4,g 622 216 19 3,g 626 214 4 2,g 634 214 6 2,g 623 219 12 1" />
  </g>
);

const Sections = () => (
  <g>
    <Bits data="p 601 255 50 3,p 596 300 43 2" />
    <Strokes items={[
      ['y', 'M603 234H645M592 246H597L604 251M605 243V252H643V243M651 238V258M649 238H652'],
      ['r', 'M603 253V237H645V253M600 254H651V258H600z'],
      ['y', 'M598 279H633M592 290H597L601 295M600 288V297H631V288M639 281V302M637 281H640'],
      ['r', 'M598 298V282H632V298M595 299H639V302H595z'],
      ['w', 'M675 234V254M678 234V254'], ['m', 'M676 235V254'], ['g', 'M678 238V252'], ['c', 'M679 234V252H685'], ['r', 'M687 234V252'], ['b', 'M675 257H683'],
      ['y', 'M661 277H672V293H661zM660 278V292M662 276H672M676 277V294M679 274H693M681 279H691V292H681z'],
      ['r', 'M679 276H693V294H679zM675 298H696'], ['w', 'M675 294H697'],
    ]} />
    <Bits data="y 605 251 38 2,y 623 232 4 2,y 593 245 5 3,y 643 235 4 3,y 650 246 3 4,g 627 260 12 3,c 624 263 14 2,y 638 263 4 2,y 600 297 31 1,y 614 278 4 2,y 592 290 5 2,y 630 279 4 3,y 638 290 3 3,r 645 238 1 16,g 614 305 13 3,c 612 308 15 2,y 627 308 3 2,y 679 241 4 3,y 686 243 2 2,c 682 253 4 3,m 680 251 2 5,y 677 253 2 4,c 678 256 5 2,y 664 275 4 2,y 658 284 2 4,y 667 279 4 4,p 669 280 3 3,y 684 273 5 2,y 688 279 3 5,y 694 277 5 3,y 694 289 5 3,y 675 283 2 4,y 692 284 3 1,r 678 276 2 3,r 679 301 15 2,g 681 300 9 2,y 684 302 9 1,g 680 303 12 1" />
  </g>
);

const FirstSheetBits = () => (
  <Bits data="y 568 100 12 3,g 581 100 8 4,b 590 100 6 3,g 593 101 10 2,y 576 103 20 2,g 570 105 8 3,g 583 107 17 2,g 589 105 4 4,w 568 108 5 1,y 598 104 5 2" />
);

const BracingPlan = () => (
  <g>
    <Bubbles at={[[668.500, 326.500], [683, 326.500], [697, 326.500], [660.500, 334.500], [660.500, 364.500]]} />
    <Strokes items={[
      ['k', 'M668 396V403M682 396V403M696 396V403'],
      ['g', 'M669 336L682 363M682 336L669 363M684 336L696 363M696 336L684 363M669 367L682 394M682 367L669 394M684 367L696 394M696 367L684 394'],
      ['r', 'M668 330H697M664 335V365'], ['y', 'M663 334H697M663 364H698M668 395H697'],
      ['g', 'M669 336H696M670 363H696M668 366H697M668 396H697'], ['m', 'M694 362H699V367H694z'],
    ]} />
    <Bits data="m 667 333 2 64,m 682 333 2 64,m 696 333 2 64,y 674 329 3 2,y 688 329 3 2,y 664 349 1 3,g 671 338 2 4,g 678 338 3 4,g 686 339 2 3,g 692 338 2 4,g 671 388 3 4,g 678 388 3 4,g 686 388 3 4,g 691 388 3 4,g 671 363 8 4,g 685 363 7 4,y 674 364 2 2,y 697 357 3 6,y 671 407 23 4,y 693 409 2 2" />
    <Bits data="y 592 346 3 7,y 595 345 9 2,y 595 352 8 1,g 594 347 9 2,g 602 347 2 6,r 593 348 3 3,m 597 355 6 2,y 607 354 2 5,y 609 358 5 1,g 609 353 4 4,y 611 345 8 2,y 616 339 3 3,y 617 345 4 2,y 616 350 4 5,g 620 338 3 6,g 625 340 5 4,g 623 346 6 3,g 622 351 7 3,y 622 341 3 8,r 620 345 2 3,c 626 337 4 2,g 630 334 1 4,y 624 354 5 2,c 628 353 3 3,r 622 350 2 6,g 629 347 2 2,m 620 358 4 1,g 623 358 5 1,g 584 369 9 2,r 593 370 2 7,y 592 377 12 1,y 596 375 12 1,y 604 374 9 1,r 601 369 7 1,y 603 367 6 2,y 606 371 7 1,y 605 376 8 1,g 609 364 3 1,g 596 381 11 1,r 619 367 9 4,r 620 373 9 3,y 620 371 3 2,y 625 370 3 3,r 630 367 9 2,g 631 370 7 5,r 626 372 5 1,y 621 377 7 3,w 623 371 2 2" />
  </g>
);

const SlabPlan = () => (
  <g>
    <Bubbles at={[[669.500, 434], [684, 434], [698, 434], [661.500, 442.500]]} />
    <Strokes items={[
      ['y', 'M663 442H670M671 440H697'], ['k', 'M670 506V511M684 506V511M698 506V511'],
      ...Array.from({ length: 16 }, (_, i): [string, string] => ['g', `M${i % 3 ? 672 : 667} ${443 + i * 4}H${i % 3 ? 697 : 702}`]),
      ['r', 'M671 437H697M673 442V505M676 442V505'],
    ]} />
    <path d="M691.500 444V506" stroke="#00ffff" strokeWidth="1" strokeDasharray="5 3" />
    <Bits data="m 669 440 2 67,m 683 440 2 67,m 697 440 2 67,g 677 473 7 3,g 686 473 6 3,g 693 473 4 3,y 676 438 3 2,y 690 438 3 2,r 684 440 2 3,b 689 443 2 6,b 692 445 2 4,b 696 447 4 3,b 701 445 2 8,b 689 500 3 4,b 692 498 2 5,b 696 497 4 4,b 701 495 2 8,g 671 510 4 6,g 669 512 7 3,r 673 508 2 3,y 671 526 32 2,y 671 524 8 4,y 682 524 2 3,y 689 525 6 2,y 698 524 2 2,g 668 444 3 3,g 667 500 3 4" />
    <Bits data="y 617 438 3 2,y 625 438 4 2,r 620 441 2 5,r 626 440 2 4,w 622 440 2 9,w 620 448 6 1,y 616 446 3 3,b 625 443 2 3,y 624 450 6 2,m 628 444 2 3,y 618 443 3 3,b 635 438 2 5,b 637 440 3 6,y 640 437 2 3,y 642 440 3 2,r 636 444 2 2,m 641 446 7 1,y 638 436 2 3,b 643 443 2 3" />
    <Bits data="g 629 473 3 24,k 630 475 1 20,r 629 473 3 2,g 617 483 24 1,r 618 478 3 2,g 621 478 5 2,y 620 480 6 1,r 621 482 4 3,y 636 480 4 1,r 634 482 6 2,r 640 483 1 3,g 643 481 5 4,g 644 480 2 7,r 619 487 7 1,y 623 495 14 5,y 623 499 15 3,r 619 512 1 8,r 619 512 22 1,r 628 510 3 10,y 626 513 3 6,r 632 515 8 1,g 620 519 6 1,g 632 520 8 1,y 631 511 2 3,y 625 522 9 6,g 628 520 4 1,r 640 512 1 7" />
  </g>
);

const FrameElevation = () => (
  <g>
    <Bubbles c="o" at={[[624.500, 556], [645.500, 556], [665.500, 556]]} />
    <Bits data="d 625 569 40 6" />
    <g shapeRendering="auto" fill="none">
      <path d="M624.500 562V575M645.500 562V575M665.500 562V575M624 567.500H666" stroke="#777" />
      <path d="M624 569l21 7 21-7M624 576l21-7 21 7M624 576.500H667M625 577l20 21M645 577l-20 21M646 577l20 21M666 577l-20 21" stroke="#f4f4f4" />
      <path d="M625 576V598M645.500 576V598M666.500 576V598" stroke="#fff" strokeWidth="2" />
    </g>
    <Bits data="r 622 576 2 22,y 621 585 3 5,w 633 565 4 2,w 653 565 4 2,r 643 575 3 2,r 665 575 2 2,m 632 589 2 2,m 653 590 2 2,m 633 606 43 2,g 637 603 10 3,g 650 603 9 2,g 636 608 9 1,g 645 572 2 2" />
    <Strokes items={[['c', 'M627 627L637 617M628 628L638 618M662 627L670 635M663 625L671 633'], ['g', 'M616 622L630 634M645 620L668 624']]} />
    <Bits data="g 622 615 1 21,g 625 615 1 21,k 623 617 2 17,r 623 623 3 3,g 616 625 9 1,y 616 630 3 4,y 619 629 3 2,g 626 626 6 1,m 619 637 9 1,g 619 635 11 1,y 625 618 2 3,g 616 618 5 1,g 655 616 1 21,g 658 616 1 21,r 652 617 10 2,y 648 619 5 2,y 653 621 3 3,y 660 621 6 2,g 647 625 8 1,g 645 628 9 1,r 656 625 3 4,g 664 617 4 2,g 651 636 13 2,m 654 639 8 1,y 652 630 3 3,m 660 628 2 2,y 682 628 3 5,g 683 630 5 1,y 685 626 5 1,y 686 627 2 5,m 682 635 5 1,y 696 627 12 1,g 698 625 9 1,y 707 627 2 6,g 696 630 4 2,r 702 629 3 1,y 700 632 7 1,m 700 635 6 1" />
  </g>
);

const Outline = ({ x, thick }: { x: number; thick?: boolean }) => (
  <g>
    <Strokes items={[
      ['g', `M${x} 452H${x + 50}V556H${x}zM${x + 2} 454H${x + 48}V554H${x + 2}z`],
      ['g', `M${x + 1} 453H${x + 49}`],
      ...(thick ? ([['g', `M${x + 1} 453H${x + 49}V555H${x + 1}z`]] as [string, string][]) : []),
      ...wallStops.map((y): [string, string] => ['g', `M${x + 2} ${y - 1}h2v2h-2M${x + 48} ${y - 1}h-2v2h2`]),
    ]} />
    <Bits data={`g ${x + 17} 454 4 2,g ${x + 30} 454 4 2,g ${x + 17} 553 4 1,g ${x + 30} 553 4 1`} />
  </g>
);

const CornerSheets = () => (
  <g>
    <Strokes items={[
      ['g', 'M1234 100V156H1334M1334 163H1249V261H1334'], ['w', 'M1261 165H1302V228H1261z'],
      ['y', 'M1272 100L1300 124M1276 100L1303 122'], ['p', 'M1278 100L1303 124M1281 100L1301 116'],
      ['c', 'M1308 101H1334M1308 101L1311 108L1315 101L1319 108L1323 101L1327 108L1331 101L1334 107'], ['y', 'M1307 100V110'],
      ['g', 'M1270 154H1293'], ['c', 'M1268 201V216M1273 201V216M1268 170V186'], ['y', 'M1272 174L1286 190M1286 174L1272 190'],
    ]} />
    <path d="M1281 100l19 16" stroke="#e07a70" strokeWidth="4" strokeDasharray="3 1" />
    <path d="M1292 234l38 19" stroke="#b9b9b9" strokeWidth="3" shapeRendering="auto" />
    <Bits data="r 1307 110 27 1,g 1318 116 9 2,y 1316 118 16 2,r 1318 120 12 1,y 1294 106 6 2,y 1303 114 7 2,y 1306 119 6 2,y 1271 132 25 3,y 1270 136 21 13,g 1273 130 12 4,r 1274 134 9 1,g 1273 146 14 2,g 1269 151 18 3,y 1280 150 14 1" />
    <path d="M1275 138l4 8 4-8 4 8" fill="none" stroke="#0b8a0b" strokeWidth="1.500" />
    <Bits data="y 1315 171 19 7,r 1320 175 6 2,d 1322 172 2 3,m 1329 171 2 2,r 1322 198 12 2,w 1323 200 9 2,m 1331 196 2 8,g 1322 202 10 2,y 1326 204 5 2,g 1294 182 6 13,d 1295 184 4 8,g 1293 204 6 13,d 1294 207 4 6,y 1265 176 8 1,c 1267 170 2 18,g 1274 172 15 2,y 1273 179 13 1,g 1277 178 5 8,y 1279 182 7 2,g 1264 194 16 1,y 1268 192 13 1,g 1263 205 5 8,y 1267 202 3 4,c 1272 202 2 15,g 1276 207 5 1,y 1283 203 3 14,g 1282 213 8 1,c 1286 203 1 14,g 1271 221 13 2,y 1274 220 8 1,g 1270 224 16 1" />
    <Bits data="y 1290 232 2 22,y 1330 232 2 22,w 1291 232 40 2,r 1290 253 44 1,y 1298 252 4 3,y 1309 253 6 2,w 1306 255 12 2" />
  </g>
);

const ViewCube = () => (
  <g shapeRendering="auto" fontFamily="Liberation Sans, sans-serif" fontWeight="700" textAnchor="middle">
    <circle cx="1261.500" cy="171" r="46.500" fill="none" stroke="#9fa3aa" strokeOpacity=".3" strokeWidth="10" />
    <rect x="1240" y="149" width="44" height="44" fill="#d0d2d4" fillOpacity=".7" stroke="#aeb1b4" strokeOpacity=".8" />
    <rect x="1248" y="158" width="28" height="27" fill="#9da1a6" fillOpacity=".4" />
    <text x="1262" y="175" fontSize="12" fontFamily="Roboto, sans-serif" fill="#454a50">TOP</text>
    <g fontSize="18" fill="#b9bbbe">
      <text x="1262" y="130">N</text><text x="1262" y="226">S</text><text x="1213.500" y="178">W</text><text x="1310" y="178">E</text>
    </g>
  </g>
);

const ModelDrawing = () => (
  <Drawing viewBox="29 100 1305 609" preserveAspectRatio="xMaxYMin slice" shapeRendering="crispEdges" role="img" aria-label="Model space drawing">
    <Frames />
    <FirstSheetBits />
    <FoundationPlan />
    <Sections />
    <BracingPlan />
    <SlabPlan />
    <FrameElevation />
    <Outline x={962} />
    <Outline x={1148} thick />
    <Bits data="g 1013 452 1 78,g 1014 530 1 27,r 1016 530 1 28,y 1015 542 2 2,g 1015 530 2 1,r 962 558 12 1,y 968 558 2 1" />
    <CornerSheets />
    <ViewCube />
    <path d="M749 355.500H778M789 355.500H818M783.500 321V350M783.500 361V390M778.500 350.500h10v10h-10z" fill="none" stroke="#fff" />
    <path d="M45.500 641V692.500H96M41.500 687.500h9v9h-9z" fill="none" stroke="#fff" />
    <g fill="#fff" fontFamily="Lato, sans-serif" fontSize="19" textAnchor="middle"><text x="53.500" y="637">Y</text><text x="106.500" y="691">X</text></g>
  </Drawing>
);

/* ---------- status bar ---------- */

const StatusBar = styled.footer`
  display: flex;
  height: 29px;
  flex: none;
  background: #393939;
  border-top: 1px solid #505050;
  justify-content: space-between;
`;

const Tabs = styled.div`
  display: flex;
  height: 17px;
  padding-left: 12px;
`;

const Tab = styled.button<{ $active?: boolean; $w: number }>`
  width: ${p => p.$w}px;
  height: 17px;
  margin-right: 1px;
  display: flex;
  align-items: center;
  justify-content: center;
  border-radius: 0 0 10px 10px;
  background: ${p => (p.$active ? 'linear-gradient(#555, #8a8a8a)' : 'linear-gradient(#4a4a4a, #5c5c5c)')};
  color: ${p => (p.$active ? '#fff' : '#b5b5b5')};
  font-weight: ${p => (p.$active ? 700 : 400)};
`;

const StatusGroups = styled.div`
  display: flex;
  gap: 1px;
  flex: none;
`;

const Group = styled.div`
  display: flex;
  align-items: center;
  height: 28px;
  border: 1px solid #787878;
  background: #4b4b4b;
  &:last-child { padding-right: 2px; }
`;

const StatusButton = styled.button<{ $w?: number; $on?: boolean }>`
  width: ${p => p.$w ?? 24}px;
  height: 26px;
  display: flex;
  align-items: center;
  justify-content: center;
  gap: 3px;
  white-space: nowrap;
  color: ${p => (p.$on ? '#2b8ff5' : '#c0c0c0')};
  ${p => p.$w && p.$w > 20 && css`color: #fff;`}
`;

const statusGroups: string[][] = [
  ['gridLines', 'gridDots', 'v'],
  ['ortho*', 'polar', 'v', 'iso', 'v', 'otrack', 'osnap*', 'v'],
  ['annoOn*', 'annoAuto', 'anno', '1:1'],
  ['cog', '1', 'plus'],
  ['ruler', 'Decimal', 'quickProps'],
  ['hardware'],
  ['isolate', 'shapes'],
  ['clean', 'menu'],
];

const textWidths: Record<string, number> = { '1:1': 34, '1': 26, Decimal: 73 };

const Gap = styled.span`
  width: 6px;
`;

const StatusItem = ({ id }: { id: string }) => {
  if (id === 'v') return <StatusButton $w={15} aria-label="Options"><Arrow /></StatusButton>;
  if (textWidths[id]) return <StatusButton $w={textWidths[id]}>{id}{id === 'Decimal' && <Gap />}<Arrow /></StatusButton>;
  const name = id.replace('*', '');
  return <StatusButton $on={id.endsWith('*')} aria-label={name}><Icon name={name} /></StatusButton>;
};

/* ---------- desktop taskbar ---------- */

const TaskBar = styled.div`
  position: relative;
  display: flex;
  align-items: center;
  height: 30px;
  flex: none;
  border-top: 1px solid #3c608c;
  background: linear-gradient(90deg, #86a5cb 0 183px, #4682c2 184px, #4785c6 30%, #5b93cb 52%, #4a86c6 62%, #4582c3 72%, #5c98d2 85%, #4a88ca);
  overflow: hidden;
`;

const TaskButton = styled.button<{ $open?: boolean; $front?: boolean; $slim?: boolean }>`
  width: ${p => (p.$slim ? 38 : 42)}px;
  height: 29px;
  margin-right: ${p => (p.$slim ? 7 : 4)}px;
  flex: none;
  display: flex;
  align-items: center;
  justify-content: center;
  border: 1px solid ${p => (p.$open ? '#a3c4e6' : 'transparent')};
  background: ${p => (p.$front ? '#c3d5e8' : p.$open ? 'rgba(255,255,255,.2)' : 'transparent')};
`;

const TaskStack = styled.span`
  width: 7px;
  height: 29px;
  flex: none;
  margin-left: -4px;
  margin-right: 1px;
  border: solid #b5c9e2;
  border-width: 0 1px;
`;

const TaskStart = styled.div`
  display: flex;
  width: 130px;
  flex: none;
`;

const Tray = styled.div`
  display: flex;
  align-items: center;
  gap: 7px;
  margin-left: auto;
  padding-right: 21px;
  color: #fff;
`;

const TrayGap = styled.span`
  width: 5px;
`;

const TrayLang = styled.span`
  width: 24px;
  margin: 0 12px 0 5px;
  text-align: center;
  font-family: "DejaVu Sans", sans-serif;
`;

const Watermark = styled.span`
  position: absolute;
  right: 0;
  bottom: 0;
  font: 16px/12px "Liberation Sans", sans-serif;
  color: #000;
`;

const Remnant = styled.span<{ $x: number }>`
  position: absolute;
  left: ${p => p.$x}px;
  bottom: 2px;
  font-size: 16px;
  line-height: 17px;
  color: #33517c;
`;

const Doc = ({ c, t }: { c: string; t: string }) => (
  <g><path d="M7 2h8v12H7z" fill="#fff" stroke={c} strokeWidth=".7" /><path d="M10 4.500h4M10 7h4M10 9.500h4M10 12h4" stroke={c} /><path d="M0 2l9-1.500v15L0 14z" fill={c} /><text x="4.500" y="11.500" fontSize="8" fontWeight="700" textAnchor="middle" fill="#fff">{t}</text></g>
);

const appIcons: Record<string, React.ReactNode> = {
  Start: <path d="M0 2.500l6.500-1v6H0zM7.500 1.300L16 0v7.500H7.500zM0 8.500h6.500v6l-6.500-1zM7.500 8.500H16V16l-8.500-1.200z" fill="#fff" />,
  Notes: <g><rect x=".5" y=".5" width="15" height="15" rx="1" fill="#f4f6f8" stroke="#5f86b4" /><path d="M3 13c4-1 7-4 9-9l2-1c-1 5-5 10-9 11z" fill="#f29a1f" /><path d="M2.500 9c3-1 5-3 6-6l1.500-.5C9 6 6 9 3 10.500z" fill="#5f9fe0" /></g>,
  Calculator: <g><rect x="2" y="0" width="12" height="16" rx="1" fill="#e6f0f8" stroke="#5f86ad" /><path d="M4 2h8v4H4z" fill="#84b9e6" /><path d="M4 8.500h8M4 11h5M4 13.500h5" stroke="#6e8397" strokeWidth="1.500" strokeDasharray="2 1" /><path d="M11 10h2v4h-2z" fill="#f08a24" /></g>,
  Chrome: <g><circle cx="8" cy="8" r="7.500" fill="#f9cf3a" /><path d="M1.500 4.200A7.500 7.500 0 0 1 14.800 4.800L8 4.800 5 9.500z" fill="#e0412f" /><path d="M1.500 4.200L5 9.700l3.500 2-1.500 3.700A7.500 7.500 0 0 1 1.500 4.200z" fill="#35a652" /><circle cx="8" cy="8" r="3.600" fill="#fff" /><circle cx="8" cy="8" r="2.800" fill="#3f7fe8" /></g>,
  Grid: <g><path d="M0 0h16v16H0z" fill="#4a3410" /><path d="M3 0v16M8 0v16M13 0v16M0 3h16M0 8h16M0 13h16" stroke="#e8d27c" strokeWidth="2.400" /></g>,
  Stress: <g><path d="M0 0h16v16H0z" fill="#f7e71f" /><path d="M0 0h4v16H0z" fill="#fff" /><path d="M3 0h3v6l-1 10H3zM8 0h8v2l-4 4z" fill="#2dae32" /><path d="M1 0h3v16H1zM12 3l3 1v6h-3z" fill="#e02a1a" /><path d="M10 12h5v4h-4z" fill="#2dae32" /><path d="M6 13h3v3H6z" fill="#111" /></g>,
  Word: <Doc c="#2b579a" t="W" />,
  Player: <g><path d="M1 0h14v16H1z" fill="#9fc5e8" /><circle cx="8" cy="8" r="6.500" fill="#f28a1c" stroke="#fff" /><path d="M6 4.500v7L12 8z" fill="#fff" /></g>,
  Explorer: <g><path d="M12.500 11c-1 2-2.500 2.800-4.500 2.800-3.500 0-5-2.500-5-5.300s2-5.500 5.300-5.500 5 2.500 5 5.500H4" fill="none" stroke="#7fd0fa" strokeWidth="2.600" /><path d="M2 15.500C-1 13 8 0 14.500.8c1.500.5 1 2.500 0 4" fill="none" stroke="#f6c63c" strokeWidth="1.400" /></g>,
  Files: <g><path d="M0 1h6l1 2h8v11H0z" fill="#efd57c" stroke="#b99a3c" strokeWidth=".6" /><path d="M0 5h15v9H0z" fill="#f9eba8" /><path d="M4 15v-5h8v5" fill="none" stroke="#5a9ad8" strokeWidth="2.500" /></g>,
  Analysis: <g><path d="M0 0l8 3 8-3-3 8 3 8-8-3-8 3 3-8z" fill="#ffe11c" stroke="#e0141b" strokeWidth="2" /><path d="M5 5l6 6M11 5l-6 6" stroke="#e0141b" strokeWidth="2" /></g>,
  Paint: <g><ellipse cx="7" cy="9" rx="6.500" ry="5" fill="#e4f0fa" stroke="#5380b0" /><circle cx="4" cy="8" r="1.300" fill="#d64040" /><circle cx="7" cy="6.500" r="1.300" fill="#3aa84a" /><circle cx="6" cy="11" r="1.300" fill="#3666d0" /><path d="M12.500 15V6" stroke="#d97a28" strokeWidth="2" /><path d="M11 6l1.500-6L14.500 6z" fill="#e8b878" /></g>,
  Reader: <g><path d="M3 1h11v14H3z" fill="#f3eeee" stroke="#873838" /><path d="M0 2h8v5H0z" fill="#c7273b" /><path d="M6 10c2 3 3 3 6-1" stroke="#c7273b" strokeWidth="1.600" /></g>,
  Firefox: <g><circle cx="8" cy="8" r="7.500" fill="#ff7a1a" /><circle cx="9" cy="7" r="4.500" fill="#6245d6" /><path d="M1 4c3 1 3-2 5-2-1 3 5 3 4 6-1 2-4 2-4 2 3 3 8 0 7-7 4 4 2 12-5 12.500C2 15.500-1 10 1 4z" fill="#ff9d1e" /><path d="M11 .5c4 2 6 8 3 11-1-5-1-7-3-11z" fill="#ffd43b" /></g>,
  Excel: <Doc c="#1e7145" t="X" />,
  Building: <g><path d="M0 0h16v16H0z" fill="#5fe0e8" /><circle cx="2" cy="2" r="2.500" fill="#ffe11c" /><path d="M0 14l2-5 1-3 2 3 1-4 2 3 2-4 1 4 2-3 1 5 2 4z" fill="#111" /><path d="M0 13h16v1H0z" fill="#111" /><path d="M0 14h16v2H0z" fill="#1e3cc4" /></g>,
  AutoCAD: <g><path d="M0 0h16v16H0z" fill="#f1e9ea" /><path d="M8 1l5 12-3 .5-2-3-2 3-3-.5z" fill="#c01f1f" /></g>,
  Browser: <g><circle cx="8" cy="8" r="8" fill="#d5e8dc" /><path d="M6 0v9M9 6.500c4 0 4 6 0 7-3 1-5-2-4-4s2-3 4-3z" stroke="#0c2340" strokeWidth="2.800" fill="none" /></g>,
};

const AppIcon = ({ name }: { name: string }) => <IconSvg viewBox="0 0 16 16" fill="none" aria-hidden="true">{appIcons[name]}</IconSvg>;

const runningApps = ['Word', 'Files', 'Paint', 'Firefox', 'AutoCAD'];

const menus = ['File', 'Edit', 'View', 'Insert', 'Format', 'Tools', 'Draw', 'Dimension', 'Modify', 'Parametric', 'Window', 'Help', 'Express'];

const TitleTool = ({ name }: { name: string }) => <Tool $w={24} aria-label={name}><Icon name={name} /></Tool>;

export default function App() {
  return (
    <Shell>
      <GlobalStyle />
      <svg width="0" height="0" style={{ position: 'absolute' }} aria-hidden="true">
        <defs>
          <linearGradient id="paper" x1="0" y1="0" x2="0" y2="1"><stop offset="0" stopColor="#ffffff" /><stop offset="1" stopColor="#c6cdd6" /></linearGradient>
          <linearGradient id="steel" x1="0" y1="0" x2="0" y2="1"><stop offset="0" stopColor="#8e949b" /><stop offset="1" stopColor="#d0d4d9" /></linearGradient>
        </defs>
      </svg>

      <Header>
        <AppButton aria-label="Application menu">
          <svg width="34" height="28" viewBox="0 0 34 28" aria-hidden="true">
            <path d="M12.500 1L24 24l-7 1-4-6-5 6-7-1z" fill="#c41e1e" />
            <path d="M12.500 1L24 24l-7 1-4-9z" fill="#9c1212" />
            <path d="M9 19l4-10 3 10c-2-1.500-5-1.500-7 0z" fill="#b01717" />
            <path d="M9 22c2-3 5-3 7 0l-1 3H10z" fill="#929292" />
            <path d="M27 13h7l-3.500 4z" fill="#333" />
          </svg>
        </AppButton>
        <HeaderRows>
          <TitleRow>
            {['new', 'open', 'save', 'print', 'undo'].map(n => <TitleTool key={n} name={n} />)}
            <DropTool label="Undo list" />
            <TitleTool name="redoOff" />
            <DropTool label="Redo list" />
            <TitleTool name="match" />
            <TitleTool name="publish" />
            <WorkspaceBox>
              <Icon name="gear" />
              <PlainSelect aria-label="Workspace"><option>1</option></PlainSelect>
              <Arrow />
            </WorkspaceBox>
            <TitleTool name="sheetSet" />
            <TitleTool name="leader" />
            <DropTool label="Leader list" />
            <Tool $w={16} aria-label="Customize"><Icon name="more" /></Tool>
            <Title><span>Autodesk AutoCAD 2015</span><span>1.dwg</span></Title>
            <Tool $w={14} aria-label="Collapse search">
              <svg width="6" height="8" viewBox="0 0 6 8" aria-hidden="true"><path d="M1 0l4 4-4 4z" fill="#fff" /></svg>
            </Tool>
            <SearchInput aria-label="Search help" placeholder="Type a keyword or phrase" />
            <TitleTool name="find" />
            <TitleTool name="user" />
            <SignIn>Sign In<Arrow /></SignIn>
            <Tool $w={23} aria-label="exchange"><Icon name="exchange" /></Tool>
            <TitleTool name="a360" />
            <DropTool label="A360 list" />
            <Rule />
            <Tool $w={28} aria-label="Help"><Icon name="helpRound" /></Tool>
            <DropTool label="Help list" />
            <WindowButtons>
              <WinButton aria-label="Minimize"><svg width="10" height="10" viewBox="0 0 10 10"><path d="M1 8h8" stroke="#222" strokeWidth="2" /></svg></WinButton>
              <WinButton aria-label="Restore"><svg width="11" height="11" viewBox="0 0 11 11"><path d="M3 3V1h7v7H8M1 3h7v7H1z" fill="none" stroke="#222" strokeWidth="1.300" /></svg></WinButton>
              <WinButton $close aria-label="Close"><svg width="9" height="9" viewBox="0 0 9 9"><path d="M1 1l7 7M8 1L1 8" stroke="#fff" strokeWidth="1.800" /></svg></WinButton>
            </WindowButtons>
          </TitleRow>
          <MenuRow>
            {menus.map(m => <MenuItem key={m}>{m}</MenuItem>)}
            <Spacer />
            <Tool $w={17} aria-label="Minimize drawing"><svg width="10" height="10" viewBox="0 0 10 10"><path d="M0 8.500h10" stroke="#2c2c2c" strokeWidth="2" /></svg></Tool>
            <Tool $w={17} aria-label="Restore drawing"><svg width="12" height="10" viewBox="0 0 12 10"><path d="M4 4V1h7v5H8M1 4h7v5H1z" fill="none" stroke="#2c2c2c" strokeWidth="1.500" /></svg></Tool>
            <Tool $w={15} aria-label="Close drawing"><svg width="9" height="9" viewBox="0 0 9 9"><path d="M1 1l7 7M8 1L1 8" stroke="#2c2c2c" strokeWidth="2.200" /></svg></Tool>
          </MenuRow>
        </HeaderRows>
      </Header>

      <ToolRow>
        <Panel>
          <GripDots />
          <Tools names="new open save | print preview publish web | cut copy paste match block | undo v redo v | pan zoomRt zoomWin zoomPrev | props center palettes sheets markup calc | help" />
        </Panel>
        <Panel>
          <GripDots />
          <Tools names="dimLin dimAli dimArc dimOrd | dimRad dimJog dimDia dimAng | quick base cont space brk | tol mark inspect jogLin | edit textEd update" />
          <Rule />
          <ComboBox w={121} pad={20} value="100 small" label="Dimension style" />
          <Tools names="dimStyle" />
        </Panel>
      </ToolRow>
      <ToolRow>
        <Panel>
          <GripDots />
          <Tools names="zoomWinP zoomDyn zoomScale zoomCenter zoomObj | zoomIn zoomOut | zoomAll zoomExt" />
        </Panel>
        <Panel>
          <GripDots />
          <Tools names="textStyle" />
          <ComboBox w={121} pad={20} value="NASHKD" label="Text style" />
          <Rule />
          <Tools names="dimStyle" />
          <ComboBox w={120} pad={19} value="100 small" label="Dimension style" />
          <Rule />
          <Tools names="tableStyle" />
          <ComboBox w={120} value="Standard" label="Table style" />
          <Rule />
          <Tools names="leaderStyle" />
          <ComboBox w={120} pad={19} value="Standard" label="Multileader style" />
        </Panel>
        <Panel $grow>
          <GripDots />
          <ComboBox w={150} value="Green" label="Colour" lead={<Swatch />} />
          <Rule />
          <ComboBox w={160} value="ByLayer" label="Linetype" lead={<Stroke $w={60} />} />
          <Rule />
          <ComboBox w={125} value="ByLayer" label="Lineweight" lead={<Stroke $w={35} />} />
          <Rule />
          <ComboBox w={90} pad={10} value="ByColor" label="Plot style" off />
        </Panel>
      </ToolRow>

      <Workspace>
        <Dock>
          <DockPanel>
            <GripDots $flat />
            <Tools tall names="line xline pline polygon rect arc circle cloud spline ellipse ellArc insert makeBlock point hatch gradient region table mtext addSel" />
          </DockPanel>
        </Dock>
        <Canvas>
          <ModelDrawing />
          <ViewLabel><button>[−]</button><button>[Top]</button><button>[2D Wireframe]</button></ViewLabel>
          <WcsButton>WCS
            <svg width="9" height="6" viewBox="0 0 9 6" aria-hidden="true"><path d="M1 1h7L4.500 5z" fill="none" stroke="#b9bcc2" /></svg>
          </WcsButton>
        </Canvas>
        <Dock $right>
          <DockPanel>
            <GripDots $flat />
            <Tools tall names="erase copyObj mirror offset array move rotate scale stretch trim extend breakPt breakObj join chamfer fillet blend explode" />
          </DockPanel>
          <DockPanel>
            <GripDots $flat />
            <Tools tall names="front back above under" />
            <DockRule />
            <Tools tall names="textFront hatchBack" />
          </DockPanel>
        </Dock>
      </Workspace>

      <StatusBar>
        <Tabs>
          <Tab $active $w={58}>Model</Tab>
          <Tab $w={64}>Layout2</Tab>
          <Tab $w={22} aria-label="New layout">
            <svg width="8" height="8" viewBox="0 0 8 8" aria-hidden="true"><path d="M4 0v8M0 4h8" stroke="#bbb" strokeWidth="2" /></svg>
          </Tab>
        </Tabs>
        <StatusGroups>
          <Group><StatusButton $w={49}>MODEL</StatusButton></Group>
          {statusGroups.map((g, i) => (
            <Group key={i}>{g.map((id, j) => <StatusItem key={j} id={id} />)}</Group>
          ))}
        </StatusGroups>
      </StatusBar>

      <TaskBar>
        <Remnant $x={0}>.7</Remnant>
        <Remnant $x={89}>0</Remnant>
        <TaskStart>
          {['Start', 'Notes', 'Calculator'].map(n => <TaskButton key={n} $slim aria-label={n}><AppIcon name={n} /></TaskButton>)}
        </TaskStart>
        <TaskButton $open aria-label="Chrome"><AppIcon name="Chrome" /></TaskButton>
        <TaskStack />
        {['Grid', 'Stress', 'Word', 'Player', 'Explorer', 'Files', 'Analysis', 'Paint', 'Reader', 'Firefox', 'Excel', 'Building', 'AutoCAD', 'Browser'].map(n => (
          <TaskButton key={n} $open={runningApps.includes(n)} $front={n === 'AutoCAD'} aria-label={n}><AppIcon name={n} /></TaskButton>
        ))}
        <Tray>
          <svg width="8" height="5" viewBox="0 0 8 5" aria-hidden="true"><path d="M0 5l4-5 4 5z" fill="#fff" /></svg>
          <TrayGap />
          <svg width="10" height="16" viewBox="0 0 10 16" aria-hidden="true"><path d="M3 1h4v1.500h2V15H1V2.500h2z" fill="#222" stroke="#fff" strokeWidth="1.300" /><path d="M3 8h4v5H3z" fill="#fff" /></svg>
          <svg width="16" height="16" viewBox="0 0 16 16" aria-hidden="true"><path d="M1 5h3l4-4v14l-4-4H1z" fill="#fff" stroke="#222" strokeWidth=".7" /><path d="M10 5c2 2 2 4 0 6M12 2.500c4 3 4 8 0 11" fill="none" stroke="#fff" /></svg>
          <svg width="16" height="16" viewBox="0 0 16 16" aria-hidden="true"><path d="M2 15v-3M5 15v-5M8 15V7.500M11 15V5M14 15V2" stroke="#fff" strokeWidth="2" /></svg>
          <TrayLang lang="fa">فا</TrayLang>
          <span>2:44 PM</span>
        </Tray>
        <Watermark>www.asansazeh.com</Watermark>
      </TaskBar>
    </Shell>
  );
}
